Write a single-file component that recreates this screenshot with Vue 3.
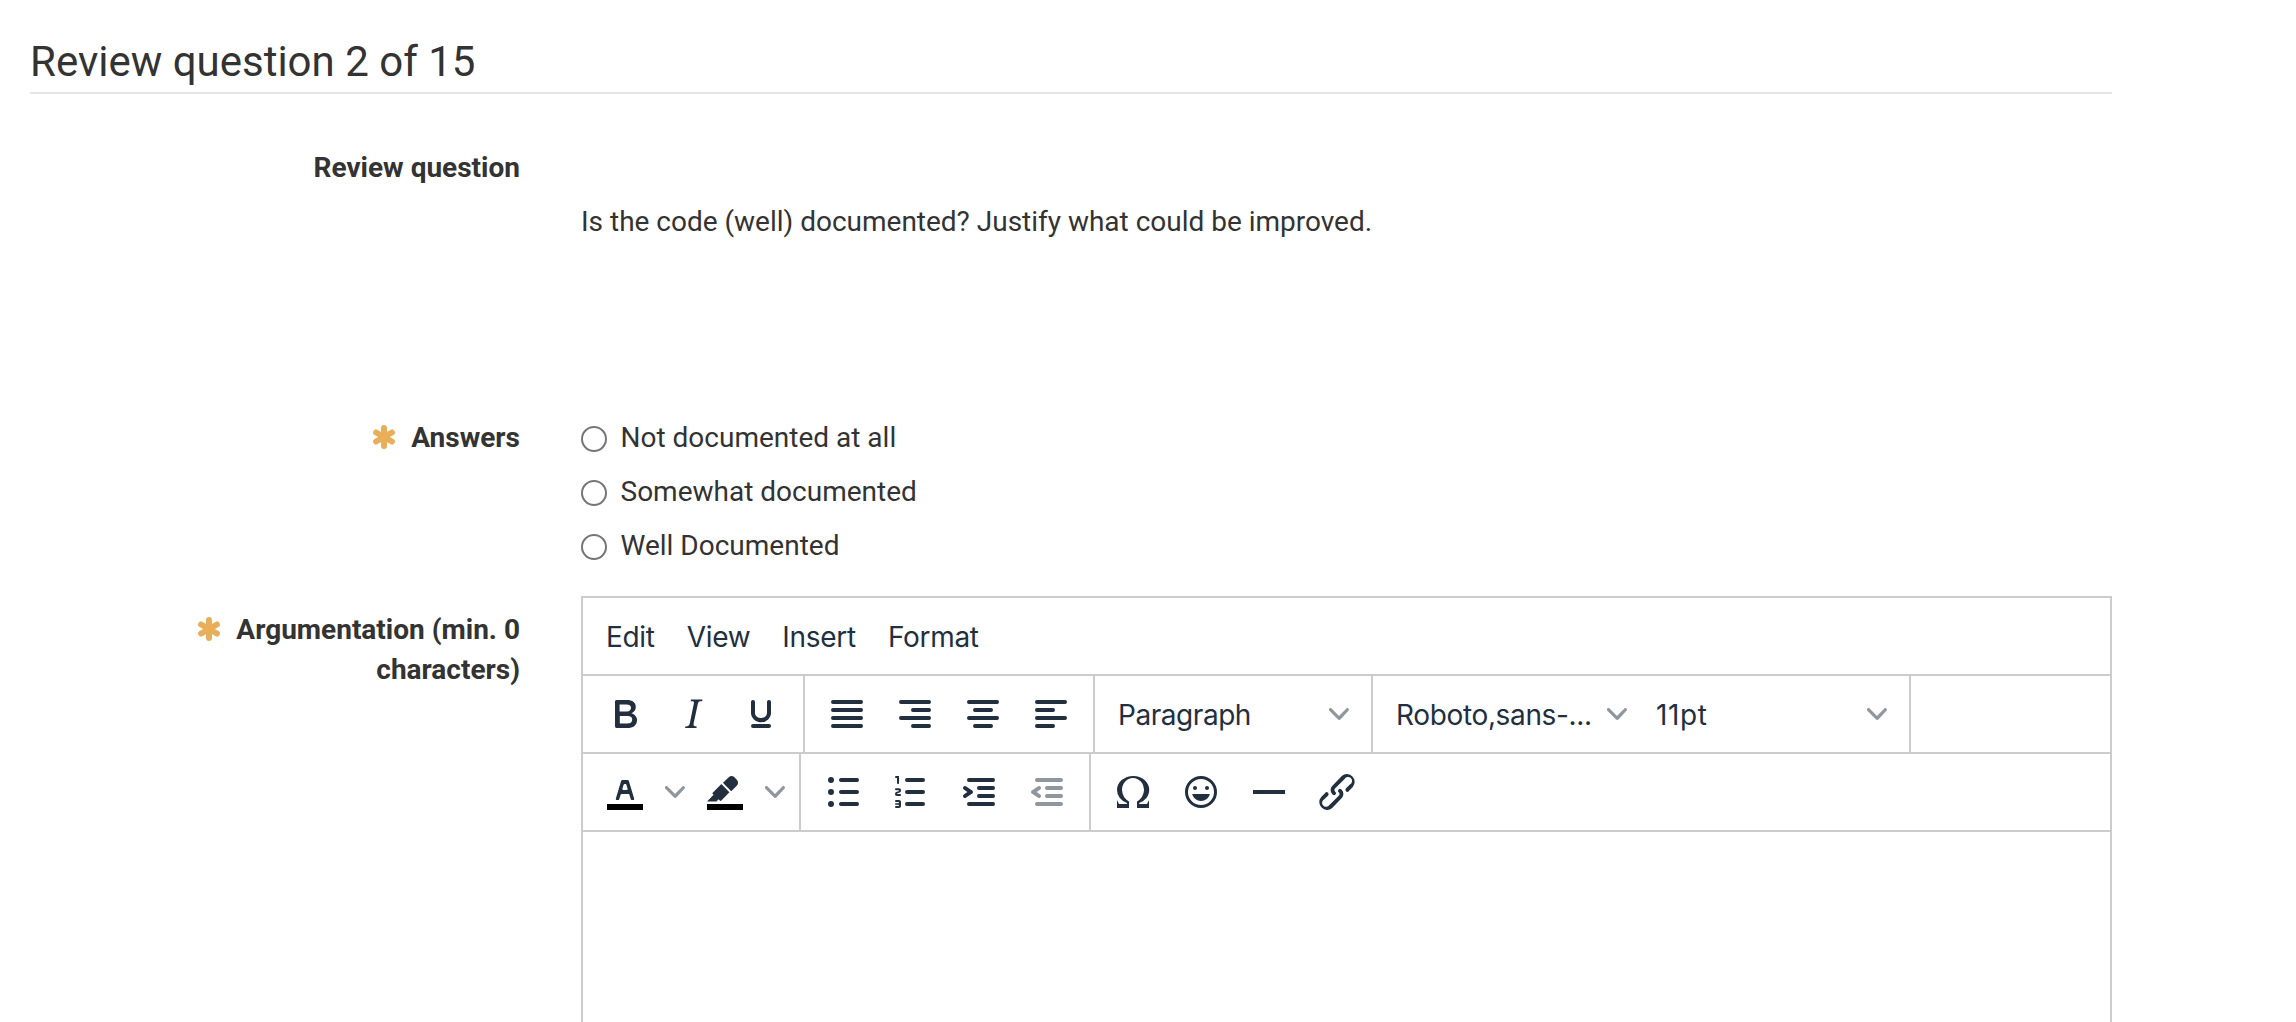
<script setup>
const menus = ['Edit', 'View', 'Insert', 'Format']
const answers = ['Not documented at all', 'Somewhat documented', 'Well Documented']

const bar = (x1, x2, y) => `M${x1} ${y - 1}H${x2}a1 1 0 0 1 0 2H${x1}a1 1 0 0 1 0-2z`
const dot = (y) => `M6 ${y - 1.5}a1.5 1.5 0 1 1 0 3a1.5 1.5 0 0 1 0-3z`
const indentBars = bar(7, 19, 6) + bar(12, 19, 10) + bar(12, 19, 14) + bar(7, 19, 18)

const icons = {
  bold: 'M7.8 19c-.3 0-.5 0-.6-.2l-.2-.5V5.7c0-.2 0-.4.2-.5l.6-.2h5c1.5 0 2.7.3 3.5 1 .7.6 1.1 1.4 1.1 2.5a3 3 0 0 1-.6 1.9c-.4.6-1 1-1.6 1.2.4.1.9.3 1.3.6s.8.7 1 1.2c.4.4.5 1 .5 1.6 0 1.3-.4 2.3-1.3 3-.8.7-2.1 1-3.8 1H7.8zm5-8.3c.6 0 1.2-.1 1.6-.5.4-.3.6-.7.6-1.3 0-1.1-.8-1.7-2.3-1.7H9.3v3.5h3.4zm.5 6c.7 0 1.3-.1 1.7-.4.4-.4.6-.9.6-1.5s-.2-1-.7-1.4c-.4-.3-1-.4-2-.4H9.4v3.8h4z',
  italic: 'M16.7 4.7l-.1.9h-.3c-.6 0-1 0-1.4.3-.3.3-.4.6-.5 1.1l-2.1 9.8v.6c0 .5.4.8 1.4.8h.2l-.2.8H8l.2-.8h.2c1.1 0 1.8-.5 2-1.5l2-9.8.1-.5c0-.6-.4-.8-1.4-.8h-.3l.2-.9h5.8z',
  underline: 'M16 5c.6 0 1 .4 1 1v5.5a4 4 0 0 1-.4 1.8l-1 1.4a5.3 5.3 0 0 1-5.5 1 5 5 0 0 1-1.6-1c-.5-.4-.8-.9-1.1-1.4a4 4 0 0 1-.4-1.8V6c0-.6.4-1 1-1s1 .4 1 1v5.5c0 .3 0 .6.2 1l.6.7a3.3 3.3 0 0 0 2.2.8 3.4 3.4 0 0 0 2.2-.8c.3-.2.4-.5.6-.8l.2-.9V6c0-.6.4-1 1-1zM8 17h8c.6 0 1 .4 1 1s-.4 1-1 1H8a1 1 0 0 1 0-2z',
  justify: bar(5, 19, 6) + bar(5, 19, 10) + bar(5, 19, 14) + bar(5, 19, 18),
  right: bar(5, 19, 6) + bar(11, 19, 10) + bar(5, 19, 14) + bar(11, 19, 18),
  center: bar(5, 19, 6) + bar(8, 16, 10) + bar(5, 19, 14) + bar(8, 16, 18),
  left: bar(5, 19, 6) + bar(5, 13, 10) + bar(5, 19, 14) + bar(5, 13, 18),
  textColor: 'M8.7 16h-.8a.5.5 0 0 1-.5-.6l2.7-9c.1-.3.3-.4.5-.4h2.8c.2 0 .4.1.5.4l2.7 9a.5.5 0 0 1-.5.6h-.8a.5.5 0 0 1-.4-.4l-.7-2.2c0-.3-.3-.4-.5-.4h-3.4c-.2 0-.4.1-.5.4l-.7 2.2c0 .3-.2.4-.4.4zm2.6-7.6l-.6 2a.5.5 0 0 0 .5.6h1.6a.5.5 0 0 0 .5-.6l-.6-2c0-.3-.3-.4-.5-.4h-.4c-.2 0-.4.1-.5.4z',
  highlight: 'M7.7 16.7H3l3.3-3.3-.7-.8L10.2 8l4 4.1-4 4.2c-.2.2-.6.2-.8 0l-.6-.7-1.1 1.1zm5-7.5L11 7.4l3-2.9a2 2 0 0 1 2.6 0L18 6c.7.7.7 2 0 2.7l-2.9 2.9-1.8-1.8-.5-.6',
  bullets: bar(11, 19, 6) + bar(11, 19, 12) + bar(11, 19, 18) + dot(6) + dot(12) + dot(18),
  numbers: bar(10, 18, 6) + bar(10, 18, 12) + bar(10, 18, 18) + 'M6 4v3.5c0 .3-.2.5-.5.5a.5.5 0 0 1-.5-.5V5h-.5a.5.5 0 0 1 0-1H6zm-1 8.8l.2.2h1.3c.3 0 .5.2.5.5s-.2.5-.5.5H4.9a1 1 0 0 1-.9-1V13c0-.4.3-.8.6-1l1.2-.4.2-.3a.2.2 0 0 0-.2-.2H4.5a.5.5 0 0 1-.5-.5c0-.3.2-.5.5-.5h1.6c.5 0 .9.4.9 1v.1c0 .4-.3.8-.6 1l-1.2.4-.2.3zM7 17v2c0 .6-.4 1-1 1H4.5a.5.5 0 0 1 0-1h1.2c.2 0 .3-.1.3-.3 0-.2-.1-.3-.3-.3H4.4a.4.4 0 1 1 0-.8h1.3c.2 0 .3-.1.3-.3 0-.2-.1-.3-.3-.3H4.5a.5.5 0 1 1 0-1H6c.6 0 1 .4 1 1z',
  indent: indentBars + 'M4.4 13.2L6.2 12l-1.8-1.2a1 1 0 0 1 1.2-1.6l3 2a1 1 0 0 1 0 1.6l-3 2a1 1 0 1 1-1.2-1.6z',
  outdent: indentBars + 'M8.6 13.2a1 1 0 0 1-1.2 1.6l-3-2a1 1 0 0 1 0-1.6l3-2a1 1 0 0 1 1.2 1.6L6.8 12l1.8 1.2z',
  omega: 'M15 18h4l1-2v4h-6v-3.3l1.4-1a6 6 0 0 0 1.8-2.9 6.3 6.3 0 0 0-.1-4.1 5.8 5.8 0 0 0-3-3.2c-.6-.3-1.3-.5-2.1-.5a5.1 5.1 0 0 0-3.9 1.8 6.3 6.3 0 0 0-1.3 6 6.2 6.2 0 0 0 1.8 3l1.4.9V20H4v-4l1 2h4v-.5l-2-1L5.4 15A6.5 6.5 0 0 1 4 11c0-1 .2-1.9.6-2.7A7 7 0 0 1 6.3 6C7.1 5.4 8 5 9 4.5c1-.3 2-.5 3.1-.5a8.8 8.8 0 0 1 5.7 2 7 7 0 0 1 1.7 2.3 6 6 0 0 1 .2 4.8c-.2.7-.6 1.3-1 1.9a7.6 7.6 0 0 1-3.6 2.5v.5z',
  smile: 'M9 11c.6 0 1-.4 1-1s-.4-1-1-1a1 1 0 0 0-1 1c0 .6.4 1 1 1zm6 0c.6 0 1-.4 1-1s-.4-1-1-1a1 1 0 0 0-1 1c0 .6.4 1 1 1zm-3 5.5c2.1 0 4-1.5 4.4-3.5H7.6c.5 2 2.3 3.5 4.4 3.5zM12 4a8 8 0 1 0 0 16 8 8 0 0 0 0-16zm0 14.5a6.5 6.5 0 1 1 0-13 6.5 6.5 0 0 1 0 13z',
  rule: 'M4 11h16v2H4z',
  link: 'M6.2 12.3a1 1 0 0 1 1.4 1.4l-2.1 2a2 2 0 1 0 2.7 2.8l4.8-4.8a1 1 0 0 0 0-1.4 1 1 0 1 1 1.4-1.3 2.9 2.9 0 0 1 0 4L9.6 20a3.9 3.9 0 0 1-5.5-5.5l2-2zm11.6-.6a1 1 0 0 1-1.4-1.4l2-2a2 2 0 1 0-2.6-2.8L11 10.3a1 1 0 0 0 0 1.4A1 1 0 1 1 9.6 13a2.9 2.9 0 0 1 0-4L14.4 4a3.9 3.9 0 0 1 5.5 5.5l-2 2z',
}
const chevron = 'M8.7 2.2c.3-.3.8-.3 1 0 .4.4.4.9 0 1.2L5.7 7.8c-.3.3-.9.3-1.2 0L.2 3.4a.8.8 0 0 1 0-1.2c.3-.3.8-.3 1.1 0L5 6l3.7-3.8z'
const star = 'M12 3V21M4.1 7.5L19.9 16.5M19.9 7.5L4.1 16.5'

const btn = (icon, disabled = false) => ({ type: 'button', icon, disabled })
const split = (icon) => ({ type: 'split', icon })
const select = (label, name) => ({ type: 'select', label, name })

const rows = [
  [
    [btn('bold'), btn('italic'), btn('underline')],
    [btn('justify'), btn('right'), btn('center'), btn('left')],
    [select('Paragraph', 'block')],
    [select('Roboto,sans-...', 'family'), select('11pt', 'size')],
  ],
  [
    [split('textColor'), split('highlight')],
    [btn('bullets'), btn('numbers'), btn('indent'), btn('outdent', true)],
    [btn('omega'), btn('smile'), btn('rule'), btn('link')],
  ],
]
</script>

<template>
  <main class="page">
    <h1 class="title">Review question 2 of 15</h1>

    <section class="row question">
      <div class="label">Review question</div>
      <p class="text">Is the code (well) documented? Justify what could be improved.</p>
    </section>

    <section class="row answers">
      <div class="label">
        <svg class="star" viewBox="0 0 24 24"><path :d="star" /></svg>Answers
      </div>
      <div class="options">
        <label v-for="a in answers" :key="a" class="option">
          <input type="radio" name="answer" class="radio" />
          <span>{{ a }}</span>
        </label>
      </div>
    </section>

    <section class="row argumentation">
      <div class="label">
        <svg class="star" viewBox="0 0 24 24"><path :d="star" /></svg>Argumentation (min. 0 characters)
      </div>
      <div class="editor">
        <nav class="menubar">
          <span v-for="m in menus" :key="m">{{ m }}</span>
        </nav>
        <div v-for="(row, r) in rows" :key="r" class="toolbar">
          <div v-for="(group, g) in row" :key="g" class="group">
            <template v-for="(item, i) in group" :key="i">
              <div v-if="item.type === 'select'" class="select" :class="item.name">
                <span>{{ item.label }}</span>
                <svg class="chevron" viewBox="0 0 10 10"><path :d="chevron" /></svg>
              </div>
              <div v-else-if="item.type === 'split'" class="split">
                <span class="button">
                  <svg class="icon" viewBox="0 0 24 24">
                    <path class="swatch" d="M3 18h18v3H3z" />
                    <path :d="icons[item.icon]" />
                  </svg>
                </span>
                <span class="arrow">
                  <svg class="chevron" viewBox="0 0 10 10"><path :d="chevron" /></svg>
                </span>
              </div>
              <span v-else class="button" :class="{ disabled: item.disabled }">
                <svg class="icon" viewBox="0 0 24 24"><path :d="icons[item.icon]" /></svg>
              </span>
            </template>
          </div>
        </div>
        <div class="content"></div>
      </div>
    </section>
  </main>
</template>

<style>
body {
  background: #fff;
}
</style>

<style scoped>
.page {
  box-sizing: border-box;
  height: 1022px;
  overflow: hidden;
  padding: 30px 184px 0 30px;
  color: #333;
  font-family: Roboto, sans-serif;
  font-size: 28px;
  line-height: 40px;
  display: flex;
  flex-direction: column;
}
.title {
  margin: 0;
  box-sizing: border-box;
  height: 64px;
  flex: none;
  font-size: 42px;
  font-weight: 400;
  line-height: 64px;
  border-bottom: 2px solid #e5e5e5;
}
.row {
  display: grid;
  grid-template-columns: 490px 1531px;
  column-gap: 61px;
  flex: none;
}
.label {
  text-align: right;
  font-weight: 700;
}
.question {
  height: 270px;
  padding-top: 54px;
  box-sizing: border-box;
}
.text {
  margin: 54px 0 0;
  letter-spacing: -0.01px;
}
.answers {
  padding-top: 54px;
}
.star {
  width: 24px;
  height: 24px;
  margin-right: 15px;
  vertical-align: -2px;
  fill: none;
  stroke: #e8ae5a;
  stroke-width: 6;
  stroke-linecap: round;
}
.options {
  display: flex;
  flex-direction: column;
  gap: 14px;
}
.option {
  display: flex;
  align-items: center;
  gap: 13.5px;
}
.radio {
  appearance: none;
  box-sizing: border-box;
  width: 26px;
  height: 26px;
  margin: 1px 0 0;
  border: 2px solid #767676;
  border-radius: 50%;
  background: #fff;
}
.argumentation {
  padding-top: 30px;
}
.argumentation .label {
  padding: 14px 0 0 150px;
}
.editor {
  box-sizing: border-box;
  height: 500px;
  border: 2px solid #ccc;
  color: #222f3e;
  font-family: Inter, sans-serif;
  letter-spacing: -0.3px;
}
.menubar {
  box-sizing: border-box;
  display: flex;
  align-items: center;
  height: 76px;
  padding: 2px 0 0 23px;
  gap: 32px;
}
.toolbar {
  display: flex;
  height: 76px;
  border-top: 2px solid #ccc;
}
.group {
  display: flex;
  align-items: center;
  padding: 0 8px;
  border-right: 2px solid #ccc;
}
.toolbar:nth-child(3) .group:last-child {
  border-right: 0;
}
.button {
  display: flex;
  width: 68px;
  justify-content: center;
}
.icon {
  width: 48px;
  height: 48px;
  fill: #222f3e;
}
.swatch {
  fill: #000;
}
.disabled {
  opacity: 0.5;
}
.split {
  display: flex;
  align-items: center;
}
.arrow {
  display: flex;
  width: 32px;
  justify-content: center;
}
.chevron {
  width: 20px;
  height: 20px;
  fill: #222f3e;
  opacity: 0.5;
}
.select {
  box-sizing: border-box;
  width: 260px;
  padding: 0 14px 0 15px;
  display: flex;
  align-items: center;
  justify-content: space-between;
}
.select span {
  padding-top: 2px;
}
.block {
  letter-spacing: -0.45px;
}
.family {
  letter-spacing: -0.35px;
}
.size {
  letter-spacing: 0.6px;
}
.content {
  border-top: 2px solid #ccc;
}
</style>
